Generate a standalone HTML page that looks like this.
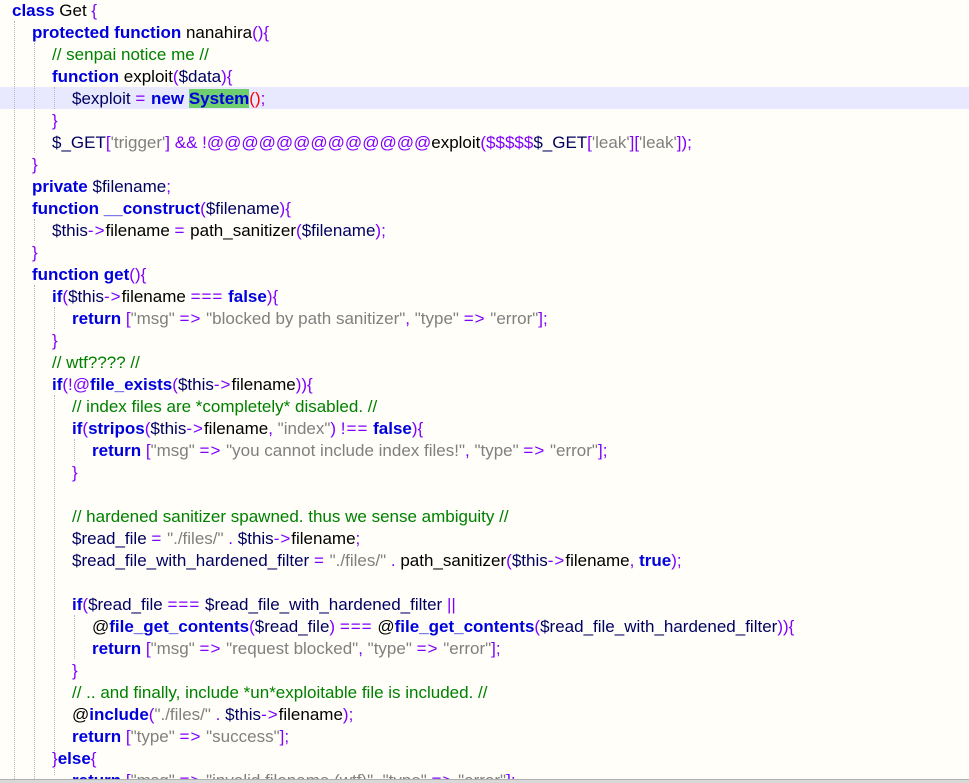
<!DOCTYPE html>
<html><head><meta charset="utf-8"><style>
html,body{margin:0;padding:0;width:969px;height:783px;overflow:hidden;background:#fffef8;}
body{font-family:"Liberation Sans",sans-serif;font-size:17px;color:#000;position:relative;}
.l{position:absolute;left:0;height:22px;line-height:22px;white-space:pre;width:969px;}
.k{color:#0000dd;font-weight:bold;}
.v{color:#000060;}
.p{color:#8000ff;}
.s{color:#808080;}
.c{color:#008000;}
.o{color:#8000ff;letter-spacing:1px;}
.g{position:absolute;width:0;border-left:1px dotted #b8b8b8;}
.hl{background:#e8e8ff;}
.sys{background:#6fcf6f;}
.r{color:#ff0000;}
.bar{position:absolute;left:0;top:779px;width:969px;height:4px;background:#d8d8d8;border-top:1px solid #b0b0b0;}
</style></head><body>
<div class="l hl" style="top:87px"></div>
<div class="g" style="left:14px;top:21px;height:760px"></div>
<div class="g" style="left:34px;top:43px;height:110px"></div>
<div class="g" style="left:54px;top:87px;height:22px"></div>
<div class="g" style="left:34px;top:219px;height:22px"></div>
<div class="g" style="left:34px;top:285px;height:500px"></div>
<div class="g" style="left:54px;top:307px;height:22px"></div>
<div class="g" style="left:54px;top:395px;height:380px"></div>
<div class="g" style="left:74px;top:439px;height:22px"></div>
<div class="g" style="left:74px;top:615px;height:44px"></div>

<div class="l" style="top:0px;padding-left:12px"><span class="k">class</span> Get <span class="p">{</span></div>
<div class="l" style="top:22px;padding-left:32px"><span class="k">protected function</span> nanahira<span class="p">(){</span></div>
<div class="l" style="top:44px;padding-left:52px"><span class="c">// senpai notice me //</span></div>
<div class="l" style="top:66px;padding-left:52px"><span class="k">function</span> exploit<span class="p">(</span><span class="v">$data</span><span class="p">){</span></div>
<div class="l" style="top:88px;padding-left:72px"><span class="v">$exploit</span> <span class="o">=</span> <span class="k">new</span> <span class="k sys">System</span><span class="r">()</span><span class="p">;</span></div>
<div class="l" style="top:110px;padding-left:52px"><span class="p">}</span></div>
<div class="l" style="top:132px;padding-left:52px"><span class="v">$_GET</span><span class="p">[</span><span class="s">'trigger'</span><span class="p">]</span> <span class="p">&amp;&amp; !@@@@@@@@@@@@@</span>exploit<span class="p">($$$$$</span><span class="v">$_GET</span><span class="p">[</span><span class="s">'leak'</span><span class="p">][</span><span class="s">'leak'</span><span class="p">]);</span></div>
<div class="l" style="top:154px;padding-left:32px"><span class="p">}</span></div>
<div class="l" style="top:176px;padding-left:32px"><span class="k">private</span> <span class="v">$filename</span><span class="p">;</span></div>
<div class="l" style="top:198px;padding-left:32px"><span class="k">function</span> <span class="k">__construct</span><span class="p">(</span><span class="v">$filename</span><span class="p">){</span></div>
<div class="l" style="top:220px;padding-left:52px"><span class="v">$this</span><span class="o">-&gt;</span>filename <span class="o">=</span> path_sanitizer<span class="p">(</span><span class="v">$filename</span><span class="p">);</span></div>
<div class="l" style="top:242px;padding-left:32px"><span class="p">}</span></div>
<div class="l" style="top:264px;padding-left:32px"><span class="k">function</span> <span class="k">get</span><span class="p">(){</span></div>
<div class="l" style="top:286px;padding-left:52px"><span class="k">if</span><span class="p">(</span><span class="v">$this</span><span class="o">-&gt;</span>filename <span class="o">===</span> <span class="k">false</span><span class="p">){</span></div>
<div class="l" style="top:308px;padding-left:72px"><span class="k">return</span> <span class="p">[</span><span class="s">"msg"</span> <span class="o">=&gt;</span> <span class="s">"blocked by path sanitizer"</span><span class="p">,</span> <span class="s">"type"</span> <span class="o">=&gt;</span> <span class="s">"error"</span><span class="p">];</span></div>
<div class="l" style="top:330px;padding-left:52px"><span class="p">}</span></div>
<div class="l" style="top:352px;padding-left:52px"><span class="c">// wtf???? //</span></div>
<div class="l" style="top:374px;padding-left:52px"><span class="k">if</span><span class="p">(!@</span><span class="k">file_exists</span><span class="p">(</span><span class="v">$this</span><span class="o">-&gt;</span>filename<span class="p">)){</span></div>
<div class="l" style="top:396px;padding-left:72px"><span class="c">// index files are *completely* disabled. //</span></div>
<div class="l" style="top:418px;padding-left:72px"><span class="k">if</span><span class="p">(</span><span class="k">stripos</span><span class="p">(</span><span class="v">$this</span><span class="o">-&gt;</span>filename<span class="p">,</span> <span class="s">"index"</span><span class="p">)</span> <span class="o">!==</span> <span class="k">false</span><span class="p">){</span></div>
<div class="l" style="top:440px;padding-left:92px"><span class="k">return</span> <span class="p">[</span><span class="s">"msg"</span> <span class="o">=&gt;</span> <span class="s">"you cannot include index files!"</span><span class="p">,</span> <span class="s">"type"</span> <span class="o">=&gt;</span> <span class="s">"error"</span><span class="p">];</span></div>
<div class="l" style="top:462px;padding-left:72px"><span class="p">}</span></div>
<div class="l" style="top:506px;padding-left:72px"><span class="c">// hardened sanitizer spawned. thus we sense ambiguity //</span></div>
<div class="l" style="top:528px;padding-left:72px"><span class="v">$read_file</span> <span class="o">=</span> <span class="s">"./files/"</span> <span class="p">.</span> <span class="v">$this</span><span class="o">-&gt;</span>filename<span class="p">;</span></div>
<div class="l" style="top:550px;padding-left:72px"><span class="v">$read_file_with_hardened_filter</span> <span class="o">=</span> <span class="s">"./files/"</span> <span class="p">.</span> path_sanitizer<span class="p">(</span><span class="v">$this</span><span class="o">-&gt;</span>filename<span class="p">,</span> <span class="k">true</span><span class="p">);</span></div>
<div class="l" style="top:594px;padding-left:72px"><span class="k">if</span><span class="p">(</span><span class="v">$read_file</span> <span class="o">===</span> <span class="v">$read_file_with_hardened_filter</span> <span class="p">||</span></div>
<div class="l" style="top:616px;padding-left:92px">@<span class="k">file_get_contents</span><span class="p">(</span><span class="v">$read_file</span><span class="p">)</span> <span class="o">===</span> @<span class="k">file_get_contents</span><span class="p">(</span><span class="v">$read_file_with_hardened_filter</span><span class="p">)){</span></div>
<div class="l" style="top:638px;padding-left:92px"><span class="k">return</span> <span class="p">[</span><span class="s">"msg"</span> <span class="o">=&gt;</span> <span class="s">"request blocked"</span><span class="p">,</span> <span class="s">"type"</span> <span class="o">=&gt;</span> <span class="s">"error"</span><span class="p">];</span></div>
<div class="l" style="top:660px;padding-left:72px"><span class="p">}</span></div>
<div class="l" style="top:682px;padding-left:72px"><span class="c">// .. and finally, include *un*exploitable file is included. //</span></div>
<div class="l" style="top:704px;padding-left:72px">@<span class="k">include</span><span class="p">(</span><span class="s">"./files/"</span> <span class="p">.</span> <span class="v">$this</span><span class="o">-&gt;</span>filename<span class="p">);</span></div>
<div class="l" style="top:726px;padding-left:72px"><span class="k">return</span> <span class="p">[</span><span class="s">"type"</span> <span class="o">=&gt;</span> <span class="s">"success"</span><span class="p">];</span></div>
<div class="l" style="top:748px;padding-left:52px"><span class="p">}</span><span class="k">else</span><span class="p">{</span></div>
<div class="l" style="top:770px;padding-left:72px"><span class="k">return</span> <span class="p">[</span><span class="s">"msg"</span> <span class="o">=&gt;</span> <span class="s">"invalid filename (wtf)"</span><span class="p">,</span> <span class="s">"type"</span> <span class="o">=&gt;</span> <span class="s">"error"</span><span class="p">];</span></div>
<div class="bar"></div>
</body></html>
